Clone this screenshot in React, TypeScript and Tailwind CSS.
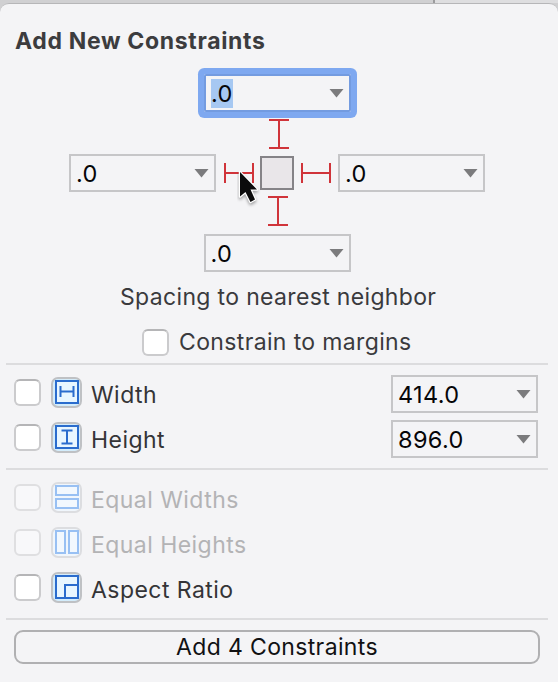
import type { ReactNode } from "react";

function Combo({ value, focused = false }: { value: string; focused?: boolean }) {
  return (
    <div
      className={`flex h-[38px] w-[147px] shrink-0 items-center justify-between border-2 pl-[5px] pr-[5px] ${
        focused
          ? "rounded-[2px] border-[#739be0] ring-6 ring-[#7ea8f0]"
          : "border-[#c6c6c8]"
      }`}
    >
      <span
        className={`mt-px text-[23.5px] leading-[29px] tracking-[0.35px] text-[#060608] ${
          focused ? "bg-[#a6c8f2]" : ""
        }`}
      >
        {value}
      </span>
      <svg className="mt-px" width="15" height="9" viewBox="0 0 15 9">
        <path d="M0.5 0H14.5L7.5 8.5Z" fill="#7b7b7d" />
      </svg>
    </div>
  );
}

function BeamV() {
  return (
    <svg width="20" height="30" viewBox="0 0 20 30" fill="none" stroke="#d0343a" strokeWidth="2">
      <path d="M0 1H20M0 29H20M10 1V29" />
    </svg>
  );
}

function BeamH() {
  return (
    <svg width="30" height="20" viewBox="0 0 30 20" fill="none" stroke="#d0343a" strokeWidth="2">
      <path d="M1 0V20M29 0V20M1 10H29" />
    </svg>
  );
}

function Check({ disabled = false }: { disabled?: boolean }) {
  return (
    <div
      className={`size-[27px] shrink-0 rounded-[6px] border-2 ${
        disabled
          ? "border-[#dfdfe1] bg-[#f8f8fa]"
          : "border-[#cbcbcd] border-t-[#b5b5b7] bg-white"
      }`}
    />
  );
}

function Glyph({ disabled = false, children }: { disabled?: boolean; children: ReactNode }) {
  return (
    <div
      className={`ml-[10px] flex size-[31px] shrink-0 items-center justify-center rounded-[7px] border-2 ${
        disabled ? "border-[#dcdde0] bg-[#f0f6fc]" : "border-[#bfc1c4] bg-[#d3ecfb]"
      }`}
    >
      <svg
        width="24"
        height="24"
        viewBox="0 0 24 24"
        strokeWidth="2"
        stroke={disabled ? "#98c0f3" : "#2a6ccd"}
        fill={disabled ? "#f2f8fe" : "#e8f6ff"}
      >
        {children}
      </svg>
    </div>
  );
}

function Row({
  label,
  value,
  disabled = false,
  icon,
}: {
  label: string;
  value?: string;
  disabled?: boolean;
  icon: ReactNode;
}) {
  return (
    <div className="flex h-[45px] items-center pr-[19px] pl-[14px]">
      <div className="mb-[2px] flex items-center">
        <Check disabled={disabled} />
        <div className="mb-px">
          <Glyph disabled={disabled}>{icon}</Glyph>
        </div>
      </div>
      <span
        className={`mt-[3px] ml-[9px] grow text-[23px] leading-7 tracking-[0.45px] ${
          disabled ? "text-[#b3b3b5]" : "text-[#343437]"
        }`}
      >
        {label}
      </span>
      {value && (
        <div className="mt-px mr-px">
          <Combo value={value} />
        </div>
      )}
    </div>
  );
}

function Separator() {
  return <div className="mr-[10px] ml-[6px] h-[2px] shrink-0 bg-[#dcdcde]" />;
}

export default function App() {
  return (
    <div className="flex h-[682px] w-[558px] flex-col overflow-hidden bg-[#d0d0d2] font-['Inter',sans-serif] whitespace-nowrap">
      <div className="flex h-[3px] shrink-0">
        <div className="w-[433px]" />
        <div className="h-[4px] w-[2px] bg-[#9c9c9e]" />
        <div className="grow bg-[#dedee0]" />
      </div>
      <div className="flex h-[679px] flex-col rounded-t-[9px] border-t border-[#b6b6b8] bg-[#f4f4f6]">
        <h1 className="mt-[23px] ml-[15px] h-[28px] text-[23px] leading-7 font-bold tracking-[0.67px] text-[#3c3c3e]">
          Add New Constraints
        </h1>
        <div className="mt-[19px] ml-[204px] h-[38px]">
          <Combo value=".0" focused />
        </div>
        <div className="mt-[7px] ml-[269px] h-[30px]">
          <BeamV />
        </div>
        <div className="mt-[5px] ml-[69px] flex h-[38px] items-center">
          <Combo value=".0" />
          <div className="relative ml-[8px]">
            <BeamH />
            <svg className="absolute top-[5px] left-[13px]" width="28" height="42" viewBox="0 0 28 42">
              <path
                d="M3 4V28.5L8.5 24L13.5 34L18 31.5L13.5 21.5H20Z"
                fill="#0b0b0c"
                stroke="#fff"
                strokeWidth="2.5"
                strokeLinejoin="round"
                style={{ paintOrder: "stroke", filter: "drop-shadow(0 2px 1.5px #0005)" }}
              />
            </svg>
          </div>
          <div className="ml-[6px] size-[34px] border-2 border-[#858387] bg-[#e9e6e9]" />
          <div className="ml-[7px]">
            <BeamH />
          </div>
          <div className="ml-[7px]">
            <Combo value=".0" />
          </div>
        </div>
        <div className="mt-[4px] ml-[268px] h-[30px]">
          <BeamV />
        </div>
        <div className="mt-[8px] ml-[203.5px] h-[38px]">
          <Combo value=".0" />
        </div>
        <p className="mt-[11px] ml-[120px] h-[28px] text-[23px] leading-7 tracking-[0.34px] text-[#3a3a3d]">
          Spacing to nearest neighbor
        </p>
        <div className="mt-[17px] ml-[142px] flex h-[28px] items-center">
          <Check />
          <span className="ml-[10px] text-[23px] leading-7 tracking-[0.36px] text-[#3a3a3d]">
            Constrain to margins
          </span>
        </div>
        <div className="mt-[7px]">
          <Separator />
        </div>
        <div className="mt-[6px]">
          <Row
            label="Width"
            value="414.0"
            icon={
              <>
                <path d="M1 1H23V23H1Z" />
                <path d="M5.5 6V17M18.5 6V17M5.5 11.5H18.5" fill="none" />
              </>
            }
          />
          <Row
            label="Height"
            value="896.0"
            icon={
              <>
                <path d="M1 1H23V23H1Z" />
                <path d="M6.5 5.5H17.5M6.5 18.5H17.5M12 5.5V18.5" fill="none" />
              </>
            }
          />
        </div>
        <div className="mt-[7px]">
          <Separator />
        </div>
        <div className="mt-[6px]">
          <Row
            label="Equal Widths"
            disabled
            icon={<path d="M1 1H23V10H1ZM1 14H23V23H1Z" />}
          />
          <Row
            label="Equal Heights"
            disabled
            icon={<path d="M1 1H10V23H1ZM14 1H23V23H14Z" />}
          />
          <Row
            label="Aspect Ratio"
            icon={<path d="M1 1H23V23H1ZM10 23V10H23V23Z" />}
          />
        </div>
        <div className="mt-[7px]">
          <Separator />
        </div>
        <button className="mt-[10px] ml-[14px] flex h-[34px] w-[526px] items-center justify-center rounded-[9px] border-2 border-[#b0b0b2] text-[23px] leading-7 tracking-[0.35px] text-[#111113]">
          Add 4 Constraints
        </button>
      </div>
    </div>
  );
}
